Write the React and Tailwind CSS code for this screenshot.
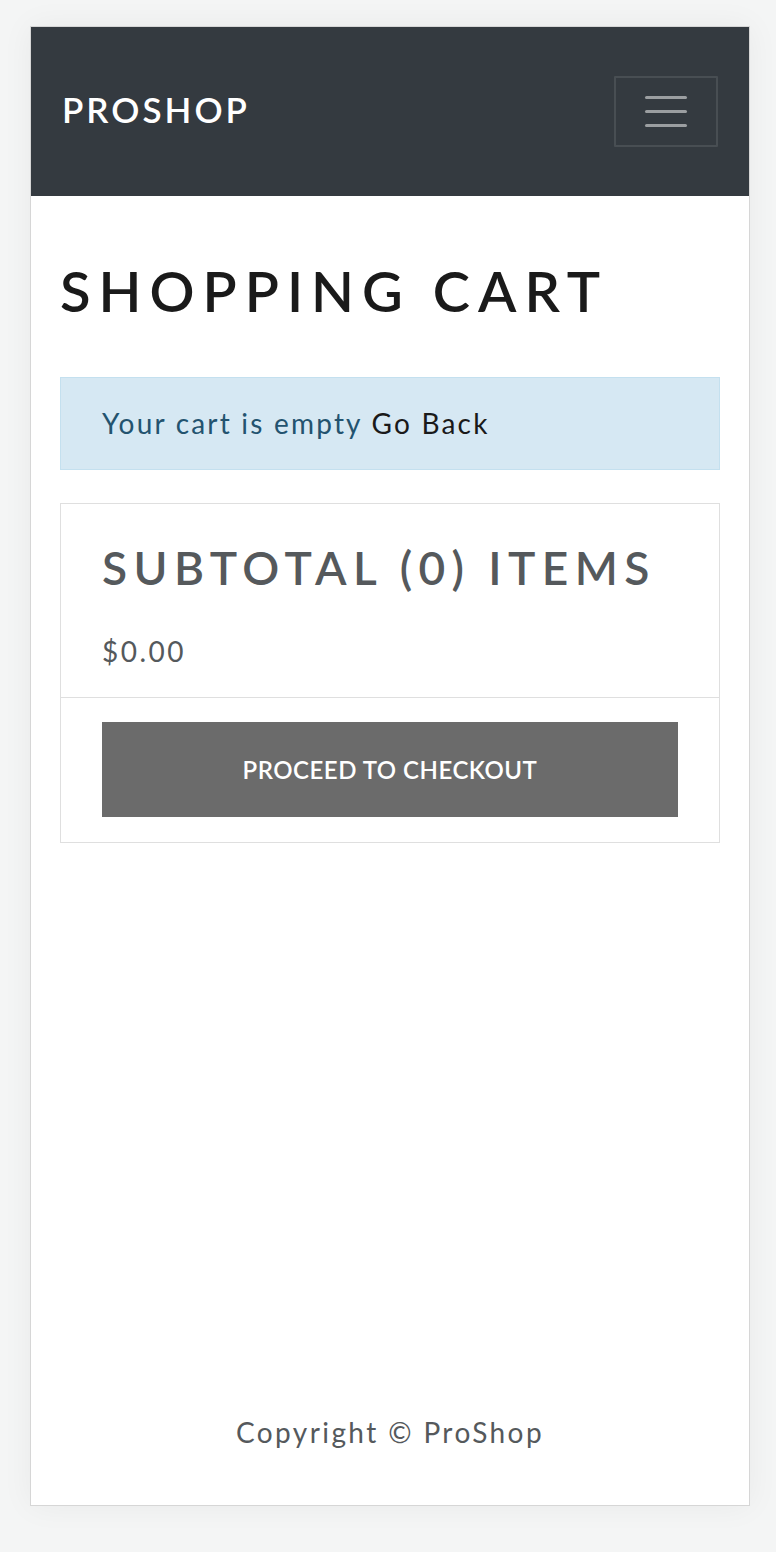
import React from "react";

export default function App() {
  return (
    <div
      className="min-h-[1552px] bg-[#f4f5f5] pt-[26px] pb-[46px] pl-[30px] pr-[26px]"
      style={{ fontFamily: "Lato, 'Noto Sans', sans-serif" }}
    >
      <div className="h-[1480px] bg-white border border-[#d6d6d6] shadow-[0_0_30px_rgba(0,0,0,0.05)] flex flex-col">
        <header className="h-[169px] bg-[#343a40] flex items-center justify-between pl-[31px] pr-[31px]">
          <a className="text-white text-[35px] font-semibold tracking-[3px] leading-[1.5] mb-[4px]">PROSHOP</a>
          <button className="w-[104px] h-[71px] border-2 border-[#484e53] rounded-[1px] flex flex-col items-center justify-center gap-[11px]">
            <span className="block w-[42px] h-[3px] rounded-full bg-[#9b9ea1]"></span>
            <span className="block w-[42px] h-[3px] rounded-full bg-[#9b9ea1]"></span>
            <span className="block w-[42px] h-[3px] rounded-full bg-[#9b9ea1]"></span>
          </button>
        </header>

        <main className="px-[29px]">
          <h1 className="mt-[61px] text-[56px] leading-[1.2] font-semibold tracking-[8px] text-[#1a1a1a]">
            SHOPPING CART
          </h1>

          <div className="mt-[53px] bg-[#d6e8f3] border border-[#c4e0ef] pl-[41px] pr-[20px] pt-[24px] pb-[25px] text-[28px] leading-[42px] tracking-[2.2px]">
            <span className="text-[#23536f]">Your cart is empty </span>
            <a className="text-[#1a1a1a]">Go Back</a>
          </div>

          <div className="mt-[33px] border border-[#dfdfdf]">
            <div className="px-[41px] pt-[36px] pb-[25px] border-b border-[#dfdfdf]">
              <h2 className="text-[46px] leading-[1.2] font-semibold tracking-[6.4px] text-[#55595c] mb-[35px]">
                SUBTOTAL (0) ITEMS
              </h2>
              <p className="text-[28px] leading-[42px] tracking-[2.5px] text-[#55595c]">$0.00</p>
            </div>
            <div className="px-[41px] pt-[24px] pb-[25px]">
              <button className="w-full h-[95px] bg-[#6b6b6b] text-white text-[24px] font-semibold tracking-[0.5px] flex items-center justify-center">
                PROCEED TO CHECKOUT
              </button>
            </div>
          </div>
        </main>

        <footer className="mt-auto pb-[52px] text-center text-[28px] leading-[42px] tracking-[2.4px] text-[#55595c]">
          Copyright © ProShop
        </footer>
      </div>
    </div>
  );
}
